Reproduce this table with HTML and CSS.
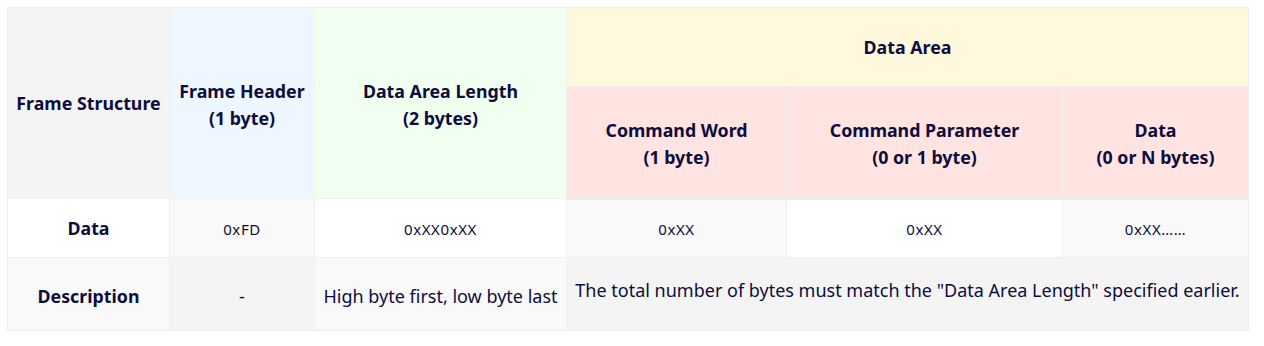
FILE: index.html
```html
<!DOCTYPE html>
<html>
<head>
<meta charset="utf-8">
<link rel="stylesheet" href="styles.css">
</head>
<body>
<div class="wrap">
<table class="frame">
  <colgroup>
    <col class="c1"><col class="c2"><col class="c3"><col class="c4"><col class="c5"><col class="c6">
  </colgroup>
  <thead>
    <tr class="h1">
      <th rowspan="2" class="fs">Frame Structure</th>
      <th rowspan="2" class="fh">Frame Header<br>(1 byte)</th>
      <th rowspan="2" class="dal">Data Area Length<br>(2 bytes)</th>
      <th colspan="3" class="da">Data Area</th>
    </tr>
    <tr class="h2">
      <th class="sub">Command Word<br>(1 byte)</th>
      <th class="sub">Command Parameter<br>(0 or 1 byte)</th>
      <th class="sub">Data<br>(0 or N bytes)</th>
    </tr>
  </thead>
  <tbody>
    <tr class="r1">
      <td class="lab">Data</td>
      <td class="code alt">0xFD</td>
      <td class="code">0xXX0xXX</td>
      <td class="code alt">0xXX</td>
      <td class="code">0xXX</td>
      <td class="code alt">0xXX……</td>
    </tr>
    <tr class="r2">
      <td class="lab">Description</td>
      <td class="alt2">-</td>
      <td>High byte first, low byte last</td>
      <td colspan="3" class="alt2 total">The total number of bytes must match the "Data Area Length" specified earlier.</td>
    </tr>
  </tbody>
</table>
</div>
</body>
</html>
```

FILE: styles.css
```css
html, body {
  margin: 0;
  padding: 0;
  background: #ffffff;
}
.wrap {
  padding: 7px;
}
.frame {
  border-collapse: collapse;
  table-layout: fixed;
  width: 1241px;
  font-family: "Noto Sans", "Open Sans", sans-serif;
  color: #0d0d3d;
}
.c1 { width: 162px; }
.c2 { width: 145px; }
.c3 { width: 252px; }
.c4 { width: 220px; }
.c5 { width: 276px; }
.c6 { width: 186px; }
.frame th, .frame td {
  border: 1px solid #f0f0f0;
  text-align: center;
  vertical-align: middle;
  padding: 0 5px;
}
.frame th {
  font-weight: 700;
  font-size: 17.8px;
  line-height: 27px;
}
.h1 { height: 79px; }
.h2 { height: 112px; }
.frame th.fh, .frame th.dal, .frame th.sub { padding-top: 4px; }
.frame thead tr.h2 th { border-bottom: 2px solid #ececec; }
.fs { background: #f4f4f4; border-bottom: 2px solid #ececec; }
.fh { background: #eef6ff; border-bottom: 2px solid #ececec; }
.dal { background: #f0fff0; border-bottom: 2px solid #ececec; }
.da { background: #fff8dc; }
.sub { background: #ffe4e1; }
.frame td {
  font-size: 18px;
  line-height: 24px;
  background: #ffffff;
}
.r1 { height: 59px; }
.r2 { height: 73px; }
.r2 td { background: #f9f9f9; padding-top: 3px; }
.frame td.lab { font-weight: 700; font-size: 17.8px; }
.frame td.code { font-size: 15px; letter-spacing: 0.6px; padding-top: 1px; }
.frame td.alt { background: #f9f9f9; }
.frame .r2 td.alt2 { background: #f4f4f4; }
.frame td.total { padding-top: 0; padding-bottom: 8px; }
```
